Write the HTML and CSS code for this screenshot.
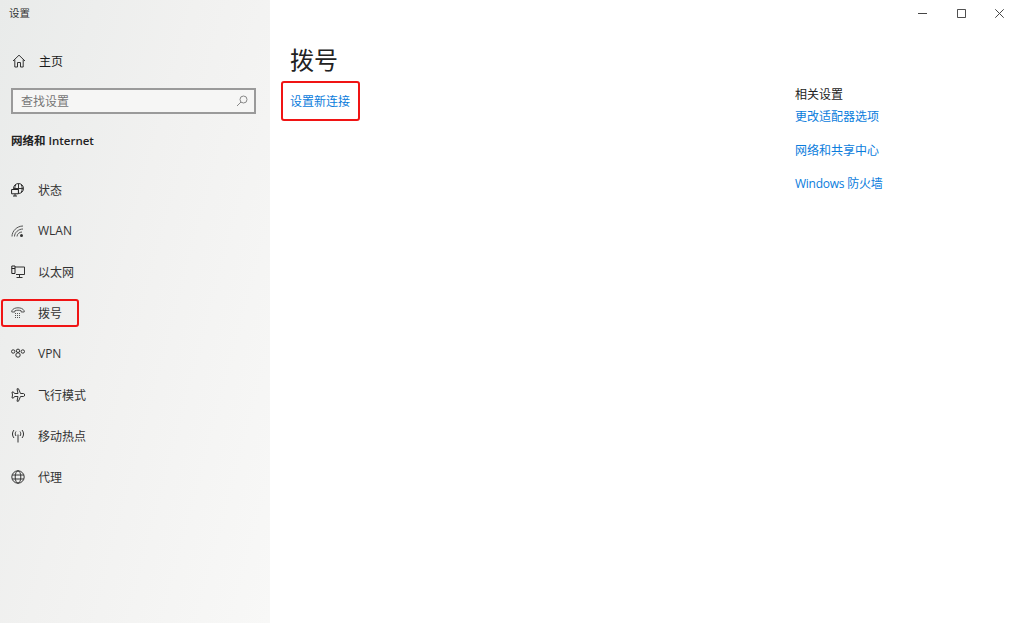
FILE: index.html
```html
<!DOCTYPE html>
<html lang="zh-CN">
<head>
<meta charset="utf-8">
<title>设置</title>
<link rel="stylesheet" href="styles.css">
</head>
<body>
<div class="window">
  <aside class="sidebar">
    <div class="app-title">设置</div>
    <a class="home-row">
      <svg class="icon" viewBox="0 0 14 14"><path d="M1 7 7 1.2 13 7M2.8 5.6V13H5.5V8.5H8.5V13H11.2V5.6"/></svg>
      <span>主页</span>
    </a>
    <div class="search">
      <span>查找设置</span>
      <svg class="search-icon" viewBox="0 0 12 12"><circle cx="7.5" cy="4.5" r="3.5"/><path d="M5 7 1 11"/></svg>
    </div>
    <div class="section">网络和 Internet</div>
    <nav class="nav">
      <a class="nav-item">
        <svg class="icon" viewBox="0 0 14 14"><circle cx="7.5" cy="5.5" r="5"/><path d="M2.5 5.5H12.5M7.5 .5V10.5M4.8 1.5C3.5 4 3.5 7 4.8 9.5M10.2 1.5C11.5 4 11.5 7 10.2 9.5"/><path class="solid" d="M.6 6.5H7.4V10.8H.6ZM2 13H6M4 10.8V13"/></svg>
        <span>状态</span>
      </a>
      <a class="nav-item">
        <svg class="icon thin" viewBox="0 0 14 14"><path d="M1 12.5C1 7 6 2 12 2M3.5 12.5C3.5 8.5 7.5 5 12 5M6 12.5C6 10 8.5 8 11 8"/><circle class="dot" cx="10.5" cy="11.5" r="1.5"/></svg>
        <span>WLAN</span>
      </a>
      <a class="nav-item">
        <svg class="icon" viewBox="0 0 14 14"><path d="M3.5 2H13.5V9.5H5M8.5 9.5V12.5M5.5 12.5H11.5"/><path class="solid" d="M.8 1H4V8.5H.8ZM.8 3.5H4"/></svg>
        <span>以太网</span>
      </a>
      <a class="nav-item">
        <svg class="icon thin" viewBox="0 0 14 14"><path d="M.8 6V4.8C2 2.5 4.5 1.8 7 1.8S12 2.5 13.2 4.8V6H10.2V4.8C8.5 4 5.5 4 3.8 4.8V6Z"/><path class="dash" d="M4 7.5H10M4 9.5H10M4 11.5H10"/></svg>
        <span>拨号</span>
      </a>
      <a class="nav-item">
        <svg class="icon" viewBox="0 0 14 14"><circle cx="2.2" cy="4.5" r="1.7"/><circle cx="11.8" cy="4.5" r="1.7"/><circle cx="7" cy="3.8" r="1.7"/><circle cx="7" cy="8" r="2.2"/></svg>
        <span>VPN</span>
      </a>
      <a class="nav-item">
        <svg class="icon" viewBox="0 0 14 14"><path d="M6 .8H7.5L9.5 5.5H12.5C14 5.5 14 8.5 12.5 8.5H9.5L7.5 13.2H6L7 8.5H3.5L2.5 10H1L1.5 7 1 4H2.5L3.5 5.5H7Z"/></svg>
        <span>飞行模式</span>
      </a>
      <a class="nav-item">
        <svg class="icon" viewBox="0 0 14 14"><path d="M7 5.5V13.5M3 1C1 3.5 1 6.5 3 9M5 2.5C4 4 4 5.5 5 7M11 1C13 3.5 13 6.5 11 9M9 2.5C10 4 10 5.5 9 7"/></svg>
        <span>移动热点</span>
      </a>
      <a class="nav-item">
        <svg class="icon" viewBox="0 0 14 14"><circle cx="7" cy="7" r="6.2"/><ellipse cx="7" cy="7" rx="2.8" ry="6.2"/><path d="M1.2 5H12.8M1.2 9H12.8"/></svg>
        <span>代理</span>
      </a>
    </nav>
    <div class="mark mark-nav"></div>
  </aside>
  <main class="content">
    <div class="controls">
      <svg class="ctl" viewBox="0 0 10 10"><path d="M0 5H10"/></svg>
      <svg class="ctl" viewBox="0 0 10 10"><path d="M.5 .5H9.5V9.5H.5Z"/></svg>
      <svg class="ctl" viewBox="0 0 10 10"><path d="M.3 .3 9.7 9.7M9.7 .3 .3 9.7"/></svg>
    </div>
    <div class="columns">
      <section class="primary">
        <h1>拨号</h1>
        <a class="link">设置新连接</a>
        <div class="mark mark-link"></div>
      </section>
      <section class="related">
        <h2>相关设置</h2>
        <a class="link">更改适配器选项</a>
        <a class="link">网络和共享中心</a>
        <a class="link link-latin">Windows 防火墙</a>
      </section>
    </div>
  </main>
</div>
</body>
</html>
```
FILE: styles.css
```css
* { box-sizing: border-box; }
html, body { margin: 0; height: 100%; }
body {
  background: #fff;
  color: #1a1a1a;
  font-family: "Open Sans", "Noto Sans CJK SC", sans-serif;
  font-size: 12px;
  overflow: hidden;
}
.window { display: flex; height: 623px; }
.sidebar {
  position: relative;
  flex: 0 0 270px;
  padding: 5px 14px 0 11px;
  background: linear-gradient(105deg, #e9ebea 0%, #f1f1f0 45%, #f8f8f7 100%);
}
.app-title { margin-left: -2px; font-size: 10.5px; line-height: 16px; height: 16px; color: #333; }
.home-row {
  display: flex;
  align-items: center;
  height: 20px;
  margin-top: 30px;
  gap: 13px;
  padding-left: 1px;
}
.icon {
  flex: none;
  width: 14px;
  height: 14px;
  fill: none;
  stroke: #333;
  stroke-width: 1;
}
.icon.thin { stroke: #555; }
.icon .solid { stroke: #222; fill: #f0f0ef; }
.icon .dot { fill: #333; stroke: none; }
.icon .dash { stroke-dasharray: 1 1; }
.search {
  display: flex;
  align-items: center;
  justify-content: space-between;
  height: 26px;
  margin-top: 17px;
  padding: 0 6px 0 8px;
  background: #f6f6f5;
  border: 2px solid #9a9a9a;
  color: #777;
}
.search-icon { width: 12px; height: 12px; fill: none; stroke: #888; stroke-width: 1; }
.section { margin-top: 19px; font-size: 11.5px; font-weight: 600; line-height: 16px; color: #222; }
.nav { margin-top: 20px; margin-left: -11px; display: flex; flex-direction: column; }
.nav-item {
  display: flex;
  align-items: center;
  height: 41px;
  padding-left: 11px;
  gap: 13px;
  color: #333;
}
.mark { position: absolute; border: 2px solid #f01414; border-radius: 3px; pointer-events: none; }
.mark-nav { left: 1px; top: 299px; width: 78px; height: 28px; }
.content { position: relative; flex: 1; display: flex; flex-direction: column; }
.controls {
  display: flex;
  justify-content: flex-end;
  align-items: center;
  gap: 29.5px;
  height: 26px;
  padding-right: 11px;
}
.ctl { width: 9px; height: 9px; fill: none; stroke: #444; stroke-width: 1.1; }
.columns { display: flex; justify-content: space-between; padding: 0 108px 0 20px; }
.primary { display: flex; flex-direction: column; align-items: flex-start; }
h1 { margin: 13px 0 0; font-size: 24px; font-weight: 400; line-height: 42px; color: #222; }
.link { color: #0a7cdc; line-height: 18px; }
.primary .link { margin-top: 12px; }
.mark-link { left: 11px; top: 81px; width: 79px; height: 40px; }
.related { display: flex; flex-direction: column; align-items: flex-start; padding-top: 60px; width: 112px; }
h2 { margin: 0 0 4px; font-size: 12px; font-weight: 400; line-height: 18px; color: #222; }
.related .link { height: 33.5px; white-space: nowrap; }
.link-latin { letter-spacing: -.25px; }
```
